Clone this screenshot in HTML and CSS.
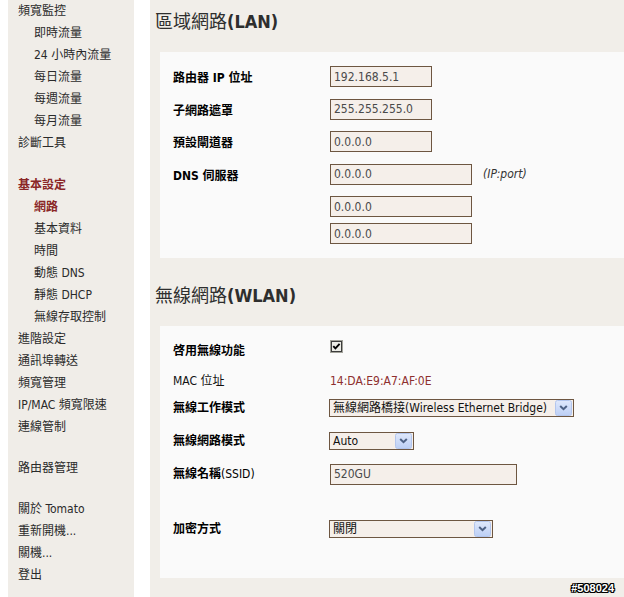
FILE: index.html
```html
<!DOCTYPE html>
<html lang="zh-Hant">
<head>
<meta charset="utf-8">
<title>Tomato - 網路</title>
<link rel="stylesheet" href="styles.css">
</head>
<body>
<div class="page">
  <nav class="sidebar">
    <div class="nav-list">
      <a class="nav-item">頻寬監控</a>
      <a class="nav-item sub">即時流量</a>
      <a class="nav-item sub">24 小時內流量</a>
      <a class="nav-item sub">每日流量</a>
      <a class="nav-item sub">每週流量</a>
      <a class="nav-item sub">每月流量</a>
      <a class="nav-item">診斷工具</a>
      <div class="nav-gap first"></div>
      <a class="nav-item active">基本設定</a>
      <a class="nav-item sub active">網路</a>
      <a class="nav-item sub">基本資料</a>
      <a class="nav-item sub">時間</a>
      <a class="nav-item sub">動態 DNS</a>
      <a class="nav-item sub">靜態 DHCP</a>
      <a class="nav-item sub">無線存取控制</a>
      <a class="nav-item">進階設定</a>
      <a class="nav-item">通訊埠轉送</a>
      <a class="nav-item">頻寬管理</a>
      <a class="nav-item">IP/MAC 頻寬限速</a>
      <a class="nav-item">連線管制</a>
      <div class="nav-gap"></div>
      <a class="nav-item">路由器管理</a>
      <div class="nav-gap"></div>
      <a class="nav-item">關於 Tomato</a>
      <a class="nav-item">重新開機...</a>
      <a class="nav-item">關機...</a>
      <a class="nav-item">登出</a>
    </div>
  </nav>

  <main class="content">
    <h2 class="section-title">區域網路<span class="latin">(LAN)</span></h2>
    <div class="panel lan">
      <div class="row">
        <div class="label">路由器 IP 位址</div>
        <input class="text w-ip" value="192.168.5.1" readonly>
      </div>
      <div class="row">
        <div class="label">子網路遮罩</div>
        <input class="text w-ip" value="255.255.255.0" readonly>
      </div>
      <div class="row">
        <div class="label">預設閘道器</div>
        <input class="text w-ip" value="0.0.0.0" readonly>
      </div>
      <div class="row">
        <div class="label">DNS 伺服器</div>
        <div class="field-stack">
          <div class="field-line">
            <input class="text w-dns" value="0.0.0.0" readonly>
            <span class="hint">(IP:port)</span>
          </div>
          <input class="text w-dns second" value="0.0.0.0" readonly>
          <input class="text w-dns third" value="0.0.0.0" readonly>
        </div>
      </div>
    </div>

    <h2 class="section-title next">無線網路<span class="latin">(WLAN)</span></h2>
    <div class="panel wlan">
      <div class="row">
        <div class="label">啓用無線功能</div>
        <span class="checkbox">
          <svg width="13" height="13" viewBox="0 0 13 13">
            <rect x="0.5" y="0.5" width="12" height="12" fill="none" stroke="#a2a29a"/>
            <rect x="1.5" y="1.5" width="10" height="10" fill="#ecece6" stroke="#3c3c3c"/>
            <path d="M3.3 6.2 L5.4 8.4 L9.6 3.9" fill="none" stroke="#000" stroke-width="1.9"/>
          </svg>
        </span>
      </div>
      <div class="row mac">
        <div class="label plain">MAC 位址</div>
        <span class="mac-value">14:DA:E9:A7:AF:0E</span>
      </div>
      <div class="row after-mac">
        <div class="label">無線工作模式</div>
        <div class="select w-mode">
          <span class="select-text">無線網路橋接(Wireless Ethernet Bridge)</span>
          <svg class="select-btn" width="17" height="16" viewBox="0 0 17 16">
            <defs>
              <linearGradient id="bg1" x1="0" y1="0" x2="0" y2="1">
                <stop offset="0" stop-color="#dfe8fc"/>
                <stop offset="1" stop-color="#bccff5"/>
              </linearGradient>
            </defs>
            <rect x="0.5" y="0.5" width="16" height="15" rx="2" fill="url(#bg1)" stroke="#b3c6ee"/>
            <path d="M5.2 6 L8.5 9.2 L11.8 6" fill="none" stroke="#4d6185" stroke-width="2"/>
          </svg>
        </div>
      </div>
      <div class="row">
        <div class="label">無線網路模式</div>
        <div class="select w-auto">
          <span class="select-text">Auto</span>
          <svg class="select-btn" width="17" height="16" viewBox="0 0 17 16">
            <rect x="0.5" y="0.5" width="16" height="15" rx="2" fill="url(#bg1)" stroke="#b3c6ee"/>
            <path d="M5.2 6 L8.5 9.2 L11.8 6" fill="none" stroke="#4d6185" stroke-width="2"/>
          </svg>
        </div>
      </div>
      <div class="row">
        <div class="label">無線名稱<span class="latin-light">(SSID)</span></div>
        <input class="text w-ssid" value="520GU" readonly>
      </div>
      <div class="row crypto">
        <div class="label">加密方式</div>
        <div class="select w-crypto">
          <span class="select-text">關閉</span>
          <svg class="select-btn" width="17" height="16" viewBox="0 0 17 16">
            <rect x="0.5" y="0.5" width="16" height="15" rx="2" fill="url(#bg1)" stroke="#b3c6ee"/>
            <path d="M5.2 6 L8.5 9.2 L11.8 6" fill="none" stroke="#4d6185" stroke-width="2"/>
          </svg>
        </div>
      </div>
    </div>
  </main>
</div>
<div class="watermark">#508024</div>
</body>
</html>
```

FILE: styles.css
```css
html, body {
  margin: 0;
  padding: 0;
  overflow: hidden;
}

body {
  font-family: "DejaVu Sans Condensed", "Liberation Sans", "Noto Sans CJK TC", sans-serif;
  font-size: 12px;
  color: #222;
  background: #ffffff;
  position: relative;
  min-height: 100vh;
}

.page {
  display: flex;
  min-height: 100vh;
}

/* ---------- sidebar ---------- */
.sidebar {
  width: 126px;
  margin-left: 8px;
  margin-right: 16px;
  background: #f0ede8;
  flex: none;
}

.nav-item {
  display: block;
  height: 22px;
  line-height: 22px;
  padding-left: 10px;
  color: #2a2a2a;
  white-space: nowrap;
  text-decoration: none;
}

.nav-item.sub {
  padding-left: 26px;
}

.nav-item.active {
  color: #8a2626;
  font-weight: bold;
}

.nav-gap {
  height: 19px;
}

.nav-gap.first {
  height: 20px;
}

/* ---------- content ---------- */
.content {
  flex: 1;
  background: #f1eee9;
  padding-left: 10px;
  overflow: hidden;
  min-height: 100vh;
}

.section-title {
  margin: 10px 0 18px -5px;
  height: 24px;
  line-height: 24px;
  font-size: 18px;
  font-weight: normal;
  color: #2e2e2e;
  white-space: nowrap;
}

.section-title .latin {
  font-weight: bold;
}

.section-title.next {
  margin-top: 26px;
}

.panel {
  background: #fafafa;
  margin-right: -40px;
  padding-left: 13px;
}

.panel.lan {
  padding-top: 14px;
  padding-bottom: 13.5px;
}

.panel.wlan {
  padding-top: 14.5px;
  padding-bottom: 38.5px;
}

.row {
  display: flex;
  align-items: center;
}

.lan .row {
  align-items: flex-start;
}

.lan .row + .row {
  margin-top: 11.5px;
}

.wlan .row {
  height: 22px;
}

.wlan .row + .row {
  margin-top: 11px;
}

.wlan .row.mac {
  margin-top: 7.5px;
}

.wlan .row.after-mac {
  margin-top: 5.5px;
}

.wlan .row.crypto {
  margin-top: 32.5px;
}

.label {
  width: 157px;
  flex: none;
  font-weight: bold;
  color: #000;
  line-height: 16px;
  white-space: nowrap;
}

.lan .label {
  line-height: 17px;
  padding-top: 4px;
}

.label.plain {
  font-weight: normal;
  color: #111;
}

.latin-light {
  font-weight: normal;
}

.text {
  box-sizing: border-box;
  height: 21px;
  margin: 0;
  border: 1px solid #6d5641;
  background: #f5efea;
  padding: 0 3px;
  font-family: inherit;
  font-size: 12px;
  color: #4a4a4a;
  outline: none;
}

.w-ip { width: 102px; }
.w-dns { width: 142px; }
.w-ssid { width: 187px; }

.field-stack {
  display: flex;
  flex-direction: column;
}

.field-line {
  display: flex;
  align-items: center;
}

.hint {
  margin-left: 11px;
  font-style: italic;
  color: #333;
  margin-top: -1px;
}

.text.second {
  margin-top: 11.5px;
}

.text.third {
  margin-top: 6px;
}

.checkbox {
  align-self: flex-start;
  display: block;
  width: 13px;
  height: 13px;
}

.checkbox svg {
  display: block;
}

.mac-value {
  color: #8e2f2f;
}

.select {
  box-sizing: border-box;
  height: 18px;
  border: 1px solid #6d5641;
  background: #f5efea;
  display: flex;
  align-items: center;
  justify-content: space-between;
  margin-left: -1px;
}

.select-text {
  padding-left: 3px;
  color: #111;
  line-height: 16px;
  white-space: nowrap;
}

.select-btn {
  display: block;
  flex: none;
  margin-right: 1px;
}

.w-mode { width: 245px; }
.w-auto { width: 85px; }
.w-crypto { width: 164px; }

.watermark {
  position: absolute;
  right: 10px;
  bottom: 2px;
  font-family: "Liberation Sans", sans-serif;
  font-weight: bold;
  font-size: 11px;
  line-height: 13px;
  color: #ffffff;
  text-shadow: -1px 0 #000, 1px 0 #000, 0 -1px #000, 0 1px #000, -1px -1px #000, 1px 1px #000, -1px 1px #000, 1px -1px #000;
}
```
